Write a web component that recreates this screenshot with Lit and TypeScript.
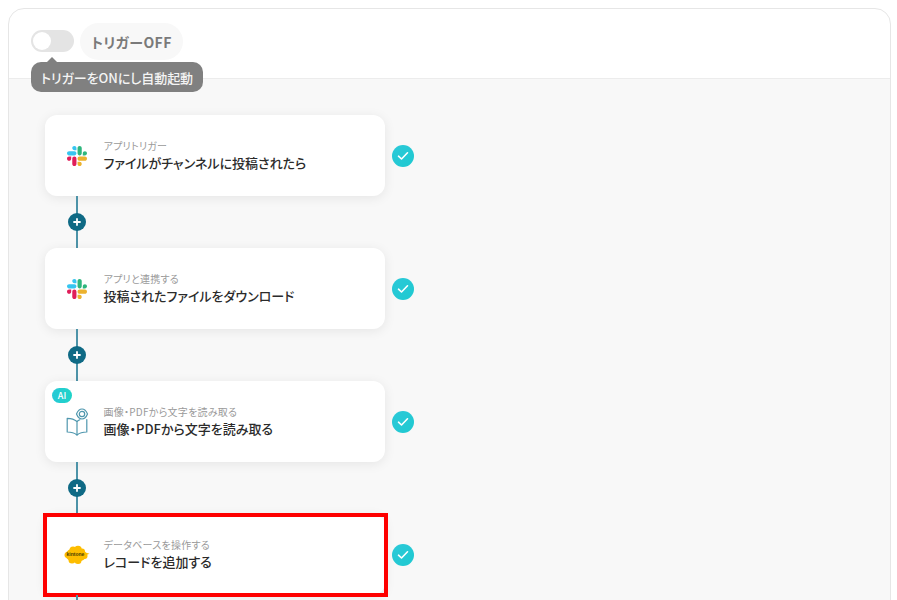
import { LitElement, html, css, svg } from "lit";
import { customElement } from "lit/decorators.js";

const slack = svg`<svg class="icon" width="20" height="20" viewBox="0 0 122.8 122.8">
<path d="M25.8 77.6c0 7.1-5.8 12.9-12.9 12.9S0 84.7 0 77.6s5.8-12.9 12.9-12.9h12.9v12.9zm6.5 0c0-7.1 5.8-12.9 12.9-12.9s12.9 5.8 12.9 12.9v32.3c0 7.1-5.8 12.9-12.9 12.9s-12.9-5.8-12.9-12.9V77.6z" fill="#e01e5a"/>
<path d="M45.2 25.8c-7.1 0-12.9-5.8-12.9-12.9S38.1 0 45.2 0s12.9 5.8 12.9 12.9v12.9H45.2zm0 6.5c7.1 0 12.9 5.8 12.9 12.9s-5.8 12.9-12.9 12.9H12.9C5.8 58.1 0 52.3 0 45.2s5.8-12.9 12.9-12.9h32.3z" fill="#36c5f0"/>
<path d="M97 45.2c0-7.1 5.8-12.9 12.9-12.9s12.9 5.8 12.9 12.9-5.8 12.9-12.9 12.9H97V45.2zm-6.5 0c0 7.1-5.8 12.9-12.9 12.9s-12.9-5.8-12.9-12.9V12.9C64.7 5.8 70.5 0 77.6 0s12.9 5.8 12.9 12.9v32.3z" fill="#2eb67d"/>
<path d="M77.6 97c7.1 0 12.9 5.8 12.9 12.9s-5.8 12.9-12.9 12.9-12.9-5.8-12.9-12.9V97h12.9zm0-6.5c-7.1 0-12.9-5.8-12.9-12.9s5.8-12.9 12.9-12.9h32.3c7.1 0 12.9 5.8 12.9 12.9s-5.8 12.9-12.9 12.9H77.6z" fill="#ecb22e"/>
</svg>`;

const book = svg`<svg class="icon" width="24" height="28" viewBox="0 0 24 28" fill="none" stroke="#4f97ae" stroke-width="1.200" stroke-linejoin="round" stroke-linecap="round">
<path d="M14.800 11.800C13.800 12.200 12.800 12.800 12 13.500C9.500 11.300 6 10.300 2.200 10.300V24C6 24 9.500 25 12 27C14.500 25 18 24 21.800 24V11.500"/>
<path d="M12 13.500V27"/>
<path d="M11.500 6C12.800 2.800 14.800 1 17 1S21.200 2.800 22.500 6C21.200 9.200 19.200 11 17 11S12.800 9.200 11.500 6Z"/>
<circle cx="17" cy="6" r="2.700"/>
</svg>`;

const kintone = html`<span class="kt"><svg width="26" height="20" viewBox="0 0 26 20" fill="#fdbd00">
<ellipse cx="12" cy="10" rx="10.500" ry="7"/><circle cx="9" cy="5" r="3.500"/><circle cx="14" cy="4.500" r="3.800"/><circle cx="18" cy="6.500" r="3"/><circle cx="8" cy="15" r="3.500"/><circle cx="14" cy="15.500" r="3.500"/><circle cx="3.500" cy="10" r="3"/><circle cx="20.500" cy="11" r="3"/>
<path d="M20 7L25.500 8.800L20 11Z"/>
</svg><span class="kt-t">kintone</span></span>`;

const steps = [
  { icon: slack, sub: "アプリトリガー", title: "ファイルがチャンネルに投稿されたら" },
  { icon: slack, sub: "アプリと連携する", title: "投稿されたファイルをダウンロード" },
  { icon: book, sub: "画像・PDFから文字を読み取る", title: "画像・PDFから文字を読み取る", ai: true },
  { icon: kintone, sub: "データベースを操作する", title: "レコードを追加する", marked: true },
];

@customElement("app-root")
export class AppRoot extends LitElement {
  static styles = css`
    :host {
      display: block;
      height: 600px;
      overflow: hidden;
      background: #fff;
      font-family: "Noto Sans CJK JP", "Noto Sans", sans-serif;
      font-feature-settings: "palt";
      padding: 8px 6px 0 8px;
      box-sizing: border-box;
    }
    .panel {
      border: 1px solid #e6e6e6;
      border-radius: 16px 16px 0 0;
      height: 640px;
      box-sizing: border-box;
      overflow: hidden;
    }
    .head {
      height: 70px;
      box-sizing: border-box;
      border-bottom: 1px solid #ececec;
      padding: 14px 0 0 22px;
      display: flex;
      align-items: flex-start;
      gap: 6px;
      position: relative;
    }
    .toggle {
      width: 43px;
      height: 22px;
      margin-top: 7px;
      border-radius: 11px;
      background: #e4e4e4;
      position: relative;
    }
    .toggle::before {
      content: "";
      position: absolute;
      left: 2px;
      top: 2px;
      width: 18px;
      height: 18px;
      border-radius: 50%;
      background: #fff;
    }
    .state {
      height: 37px;
      width: 103px;
      border-radius: 19px;
      background: #f8f8f8;
      display: flex;
      align-items: center;
      justify-content: center;
      font-size: 14px;
      font-weight: 700;
      color: #7a7a7a;
      letter-spacing: .4px;
    }
    .tip {
      position: absolute;
      left: 22px;
      top: 53px;
      width: 172px;
      height: 30px;
      border-radius: 10px;
      background: #808080;
      color: #f4f4f4;
      font-size: 13px;
      font-weight: 500;
      letter-spacing: -.05px;
      display: flex;
      align-items: center;
      justify-content: center;
      white-space: nowrap;
      z-index: 2;
    }
    .tip::before {
      content: "";
      position: absolute;
      left: 15px;
      top: -5px;
      border-left: 6px solid transparent;
      border-right: 6px solid transparent;
      border-bottom: 6px solid #808080;
    }
    .body {
      background: #f8f8f8;
      height: 600px;
      padding: 36px 0 0 36px;
      box-sizing: border-box;
    }
    .row {
      display: flex;
      align-items: center;
      gap: 7px;
    }
    .card {
      position: relative;
      width: 340px;
      height: 81px;
      box-sizing: border-box;
      background: #fff;
      border-radius: 12px;
      box-shadow: 0 2px 12px rgba(0, 0, 0, .08);
      display: flex;
      align-items: center;
      padding-left: 22px;
    }
    .icon-box {
      width: 20px;
      display: flex;
      justify-content: center;
      align-items: center;
      flex: none;
      margin-right: 16.500px;
    }
    .icon { flex: none; display: block; }
    .texts { display: flex; flex-direction: column; margin-top: -1px; }
    .sub {
      font-size: 10px;
      line-height: 15px;
      color: #9a9a9a;
      letter-spacing: .25px;
    }
    .title {
      font-size: 13px;
      line-height: 20px;
      font-weight: 500;
      color: #2b2b2b;
    }
    .ai {
      position: absolute;
      left: 7px;
      top: 7px;
      width: 20px;
      height: 15px;
      border-radius: 8px;
      background: linear-gradient(90deg, #27c9d6, #1fd3c8);
      color: #fff;
      font-size: 9px;
      font-weight: 500;
      display: flex;
      align-items: center;
      justify-content: center;
    }
    .mark {
      position: absolute;
      left: -2px;
      top: -1px;
      width: 345px;
      height: 84px;
      box-sizing: border-box;
      border: 4px solid #fe0000;
    }
    .check {
      width: 22px;
      height: 22px;
      border-radius: 50%;
      background: linear-gradient(135deg, #2cc9d9, #1ec9d0);
      display: flex;
      align-items: center;
      justify-content: center;
      flex: none;
    }
    .link {
      width: 32px;
      height: 52px;
      margin-left: 16px;
      display: flex;
      align-items: center;
      justify-content: center;
      position: relative;
    }
    .link::before {
      content: "";
      position: absolute;
      left: 15px;
      top: 0;
      bottom: 0;
      width: 2px;
      background: #4d93a8;
    }
    .plus {
      position: relative;
      width: 18px;
      height: 18px;
      border-radius: 50%;
      background: #0f6a85;
      display: flex;
      align-items: center;
      justify-content: center;
    }
    .kt { position: relative; display: block; width: 26px; height: 20px; margin-left: 0; flex: none; }
    .kt svg { display: block; }
    .kt-t {
      position: absolute;
      left: 2.500px;
      top: 6.500px;
      font-size: 5px;
      line-height: 6px;
      font-weight: 700;
      color: #4a3c00;
      font-family: "Liberation Sans", sans-serif;
    }
  `;

  render() {
    return html`<div class="panel">
      <div class="head">
        <div class="toggle"></div>
        <div class="state">トリガーOFF</div>
        <div class="tip">トリガーをONにし自動起動</div>
      </div>
      <div class="body">
        ${steps.map(
          (s) => html`<div class="row">
              <div class="card">
                ${s.ai ? html`<span class="ai">AI</span>` : ""}
                <div class="icon-box">${s.icon}</div>
                <div class="texts">
                  <div class="sub">${s.sub}</div>
                  <div class="title">${s.title}</div>
                </div>
                ${s.marked ? html`<div class="mark"></div>` : ""}
              </div>
              <div class="check">
                <svg width="12" height="10" viewBox="0 0 12 10" fill="none" stroke="#fff" stroke-width="1.600" stroke-linecap="round" stroke-linejoin="round"><path d="M1.500 5.200L4.500 8L10.500 1.800"/></svg>
              </div>
            </div>
            <div class="link">
              <div class="plus">
                <svg width="8" height="8" viewBox="0 0 8 8" stroke="#fff" stroke-width="1.800" stroke-linecap="round"><path d="M4 1V7M1 4H7"/></svg>
              </div>
            </div>`
        )}
      </div>
    </div>`;
  }
}
